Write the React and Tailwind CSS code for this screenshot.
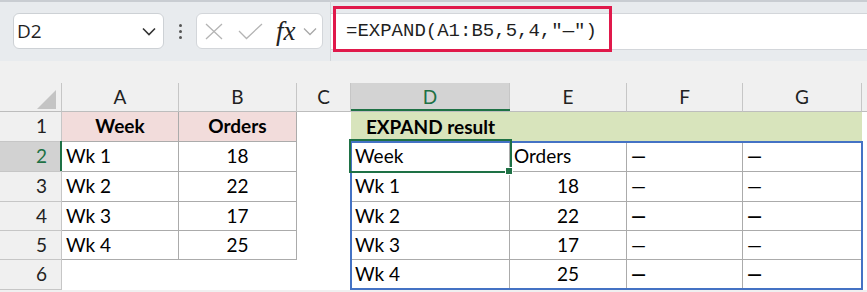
import React from 'react';

const HEAD = [
  { key: '', w: 62 },
  { key: 'A' },
  { key: 'B' },
  { key: 'C' },
  { key: 'D', selected: true },
  { key: 'E' },
  { key: 'F' },
  { key: 'G' },
  { key: '' },
];

// p = pink header, g = green header, b = bordered cell
const ROWS = [
  {
    n: 1,
    cells: [
      { t: 'Week', center: true, bold: true, fill: 'p', b: true },
      { t: 'Orders', center: true, bold: true, fill: 'p', b: true },
      {},
      { t: 'EXPAND result', center: true, bold: true, fill: 'g' },
      { fill: 'g' },
      { fill: 'g' },
      { fill: 'g' },
    ],
  },
  {
    n: 2,
    selected: true,
    cells: [
      { t: 'Wk 1', b: true },
      { t: '18', center: true, b: true },
      {},
      { t: 'Week', b: true },
      { t: 'Orders', b: true },
      { t: '—', b: true, dash: 'mid' },
      { t: '—', b: true, dash: 'mid' },
    ],
  },
  {
    n: 3,
    cells: [
      { t: 'Wk 2', b: true },
      { t: '22', center: true, b: true },
      {},
      { t: 'Wk 1', b: true },
      { t: '18', center: true, b: true },
      { t: '—', b: true },
      { t: '—', b: true },
    ],
  },
  {
    n: 4,
    cells: [
      { t: 'Wk 3', b: true },
      { t: '17', center: true, b: true },
      {},
      { t: 'Wk 2', b: true },
      { t: '22', center: true, b: true },
      { t: '—', b: true, dash: 'bold' },
      { t: '—', b: true, dash: 'bold' },
    ],
  },
  {
    n: 5,
    cells: [
      { t: 'Wk 4', b: true },
      { t: '25', center: true, b: true },
      {},
      { t: 'Wk 3', b: true },
      { t: '17', center: true, b: true },
      { t: '—', b: true },
      { t: '—', b: true },
    ],
  },
  {
    n: 6,
    cells: [
      {},
      {},
      {},
      { t: 'Wk 4', b: true },
      { t: '25', center: true, b: true },
      { t: '—', b: true, dash: 'bold' },
      { t: '—', b: true, dash: 'bold' },
    ],
  },
];

function Cell({ c }) {
  const fill = c.fill === 'p' ? 'bg-[#f2dcdb]' : c.fill === 'g' ? 'bg-[#d8e4bc]' : 'bg-white';
  const border = c.b ? 'border-r border-b border-[#ababab]' : '';
  const weight = c.bold || c.dash === 'bold' ? 'font-bold' : c.dash === 'mid' ? 'font-semibold' : 'font-normal';
  return (
    <div
      className={`flex items-center overflow-visible whitespace-nowrap text-[19px] text-black ${
        c.center ? 'justify-center' : 'justify-start pl-[4px]'
      } ${fill} ${border} ${weight}`}
    >
      {c.t}
    </div>
  );
}

export default function App() {
  return (
    <div className="w-[867px] h-[292px] overflow-hidden bg-[#f0f0f0] font-['Lato',sans-serif] relative">
      {/* Toolbar */}
      <div className="relative flex h-[61px] border-t-2 border-[#c9cdd2] bg-[#e8ebee]">
        <div className="ml-[13px] mt-[11px] flex h-[36px] w-[151px] items-center justify-between rounded-md border border-[#cdd1d5] bg-white pl-[3px] pr-[7px]">
          <span className="font-['Open_Sans',sans-serif] text-[19px] text-[#1f1f1f]">D2</span>
          <svg width="14" height="9" viewBox="0 0 14 9" fill="none">
            <path d="M1 1.5 L7 7.5 L13 1.5" stroke="#333" strokeWidth="1.6" />
          </svg>
        </div>

        <div className="ml-[14px] mt-[11px] flex h-[36px] w-[4px] flex-col items-center justify-center gap-[3px]">
          <span className="h-[3px] w-[3px] rounded-full bg-[#555]" />
          <span className="h-[3px] w-[3px] rounded-full bg-[#555]" />
          <span className="h-[3px] w-[3px] rounded-full bg-[#555]" />
        </div>

        <div className="ml-[14px] mt-[11px] flex h-[36px] w-[127px] items-center rounded-md border border-[#d3d6da] bg-white">
          <svg className="ml-[8px]" width="18" height="17" viewBox="0 0 18 17" fill="none">
            <path d="M1 1 L17 16 M17 1 L1 16" stroke="#b4b4b4" strokeWidth="1.3" />
          </svg>
          <svg className="ml-[15px]" width="25" height="17" viewBox="0 0 25 17" fill="none">
            <path d="M1 8 L8.5 15.5 L24 1" stroke="#b4b4b4" strokeWidth="1.3" />
          </svg>
          <span className="ml-[13px] font-['Liberation_Serif',serif] text-[27px] font-normal italic leading-none text-[#222]">
            fx
          </span>
          <svg className="ml-[7px]" width="14" height="9" viewBox="0 0 14 9" fill="none">
            <path d="M1 1.5 L7 7.5 L13 1.5" stroke="#a8a8a8" strokeWidth="1.3" />
          </svg>
        </div>

        <div className="ml-[7px] -mt-[2px] w-px bg-[#d2d5d9]" />

        <div className="mt-[11px] flex h-[37px] flex-1 items-center border-y border-[#d3d6da] bg-white pl-[15px]">
          <span className="font-['Liberation_Mono',monospace] text-[19px] text-[#1f1f1f]">=EXPAND(A1:B5,5,4,"—")</span>
        </div>

        <div className="absolute left-[333px] top-[4px] h-[46px] w-[279px] border-[3px] border-[#e0194b]" />
      </div>

      {/* Sheet */}
      <div className="pt-[22px]">
        <div className="relative grid grid-cols-[62px_117px_118px_54px_159px_117px_116px_119px_1fr] grid-rows-[29px_30px_30px_30px_29px_29px_30px]">
          {HEAD.map((h, i) => (
            <div
              key={i}
              className={`flex items-center justify-center border-b border-[#bdbdbd] text-[19px] ${
                i < 8 ? 'border-r border-r-[#c6c6c6]' : ''
              } ${h.selected ? 'bg-[#d3d3d3] text-[#1e7145]' : 'bg-[#f0f0f0] text-[#222]'}`}
            >
              {i === 0 ? (
                <svg className="ml-auto mr-[4px] mt-[5px]" width="20" height="19" viewBox="0 0 20 19">
                  <polygon points="19,0 19,19 0,19" fill="#c4c4c4" />
                </svg>
              ) : (
                h.key
              )}
            </div>
          ))}

          {ROWS.map((r) => (
            <React.Fragment key={r.n}>
              <div
                className={`flex items-center justify-end border-r border-b border-[#c6c6c6] pr-[14px] text-[19px] ${
                  r.selected ? 'bg-[#d2d2d2] text-[#1e7145]' : 'bg-[#f0f0f0] text-[#222]'
                }`}
              >
                {r.n}
              </div>
              {r.cells.map((c, i) => (
                <Cell key={i} c={c} />
              ))}
              <div className="bg-white" />
            </React.Fragment>
          ))}

          {/* selected column / row markers */}
          <div className="absolute left-[351px] top-[26px] h-[2px] w-[159px] bg-[#1e7145]" />
          <div className="absolute left-[60px] top-[58px] h-[30px] w-[2px] bg-[#1e7145]" />

          {/* spilled range outline */}
          <div className="pointer-events-none absolute left-[350px] top-[58px] h-[149px] w-[513px] border-2 border-[#4472c4]" />

          {/* active cell */}
          <div className="pointer-events-none absolute left-[349px] top-[56px] h-[34px] w-[163px] border-2 border-[#1e7145]" />
          <div className="absolute left-[505px] top-[84px] h-[8px] w-[8px] border border-white bg-[#1e7145]" />
        </div>
      </div>
    </div>
  );
}
